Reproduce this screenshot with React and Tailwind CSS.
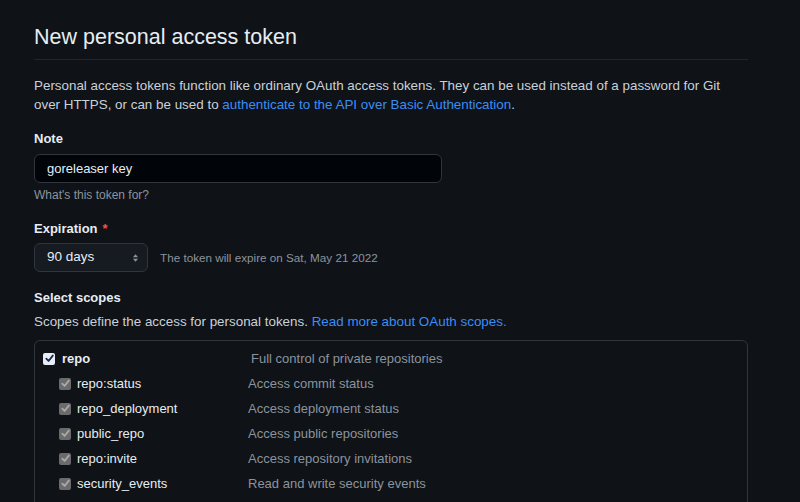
import React from "react";

const font = { fontFamily: '"Liberation Sans", Arial, sans-serif' };

function MainCheck() {
  return (
    <span className="flex h-[12px] w-[12px] items-center justify-center rounded-[2px] bg-[#e8eef7]">
      <svg viewBox="0 0 12 12" className="h-[11px] w-[11px]">
        <path d="M2.5 6.2 L5 8.7 L9.6 2.8" fill="none" stroke="#1b2a4a" strokeWidth="2" strokeLinecap="round" strokeLinejoin="round" />
      </svg>
    </span>
  );
}

function SubCheck() {
  return (
    <span className="flex h-[12px] w-[12px] items-center justify-center rounded-[2px] bg-[#6b6b6b]">
      <svg viewBox="0 0 12 12" className="h-[11px] w-[11px]">
        <path d="M2.5 6.2 L5 8.7 L9.6 2.8" fill="none" stroke="#a9a9a9" strokeWidth="2" strokeLinecap="round" strokeLinejoin="round" />
      </svg>
    </span>
  );
}

const subs = [
  ["repo:status", "Access commit status"],
  ["repo_deployment", "Access deployment status"],
  ["public_repo", "Access public repositories"],
  ["repo:invite", "Access repository invitations"],
  ["security_events", "Read and write security events"],
];

export default function App() {
  return (
    <div style={font} className="h-[502px] w-[800px] overflow-hidden bg-[#0f1217] text-[#c9d1d9]">
      <div className="ml-[34px] w-[714px] pt-[22px]">
        <h2 className="border-b border-[#21262d] pb-[7px] text-[21.5px] leading-[30px] font-normal text-[#e6edf3]">
          New personal access token
        </h2>
        <p className="mt-[16px] text-[13.4px] leading-[19px] text-[#c9d1d9]">
          Personal access tokens function like ordinary OAuth access tokens. They can be used instead of a password for Git over HTTPS, or can be used to{" "}
          <span className="text-[#3a8ef6]">authenticate to the API over Basic Authentication</span>.
        </p>

        <div className="mt-[16px] text-[13px] leading-[18px] font-bold text-[#e6edf3]">Note</div>
        <div className="mt-[6px] flex h-[29px] w-[408px] items-center rounded-[6px] border border-[#30363d] bg-[#010409] px-[12px] text-[13px] text-[#e6edf3]">
          goreleaser key
        </div>
        <div className="mt-[4px] text-[12px] leading-[16px] text-[#8b949e]">What's this token for?</div>

        <div className="mt-[17px] flex items-center text-[13px] leading-[18px] font-bold text-[#e6edf3]">
          Expiration <span className="ml-[5px] text-[#f85149]">*</span>
        </div>
        <div className="mt-[5px] flex items-center">
          <div className="flex h-[29px] w-[114px] items-center justify-between rounded-[6px] border border-[#30363d] bg-[#161b22] pl-[12px] pr-[8px] text-[13.5px] text-[#e6edf3]">
            <span>90 days</span>
            <svg viewBox="0 0 8 12" className="h-[10px] w-[7px]">
              <path d="M1 5 L4 1.5 L7 5 Z" fill="#8b949e" />
              <path d="M1 7 L4 10.5 L7 7 Z" fill="#8b949e" />
            </svg>
          </div>
          <span className="ml-[12px] text-[11.7px] text-[#8b949e]">The token will expire on Sat, May 21 2022</span>
        </div>

        <div className="mt-[17px] text-[13px] leading-[18px] font-bold text-[#e6edf3]">Select scopes</div>
        <p className="mt-[6px] text-[13.4px] leading-[18px] text-[#c9d1d9]">
          Scopes define the access for personal tokens. <span className="text-[#3a8ef6]">Read more about OAuth scopes.</span>
        </p>

        <div className="mt-[9px] rounded-t-[6px] border border-[#30363d] pt-[9px] pl-[8px]">
          <div className="flex h-[17px] items-center text-[13px]">
            <MainCheck />
            <span className="ml-[7px] w-[189px] font-bold text-[#e6edf3]">repo</span>
            <span className="text-[#8b949e]">Full control of private repositories</span>
          </div>
          {subs.map(([n, d]) => (
            <div key={n} className="mt-[8px] flex h-[17px] items-center pl-[16px] text-[13px]">
              <SubCheck />
              <span className="ml-[6px] w-[171px] text-[#e6edf3]">{n}</span>
              <span className="text-[#8b949e]">{d}</span>
            </div>
          ))}
          <div className="h-[20px]" />
        </div>
      </div>
    </div>
  );
}
